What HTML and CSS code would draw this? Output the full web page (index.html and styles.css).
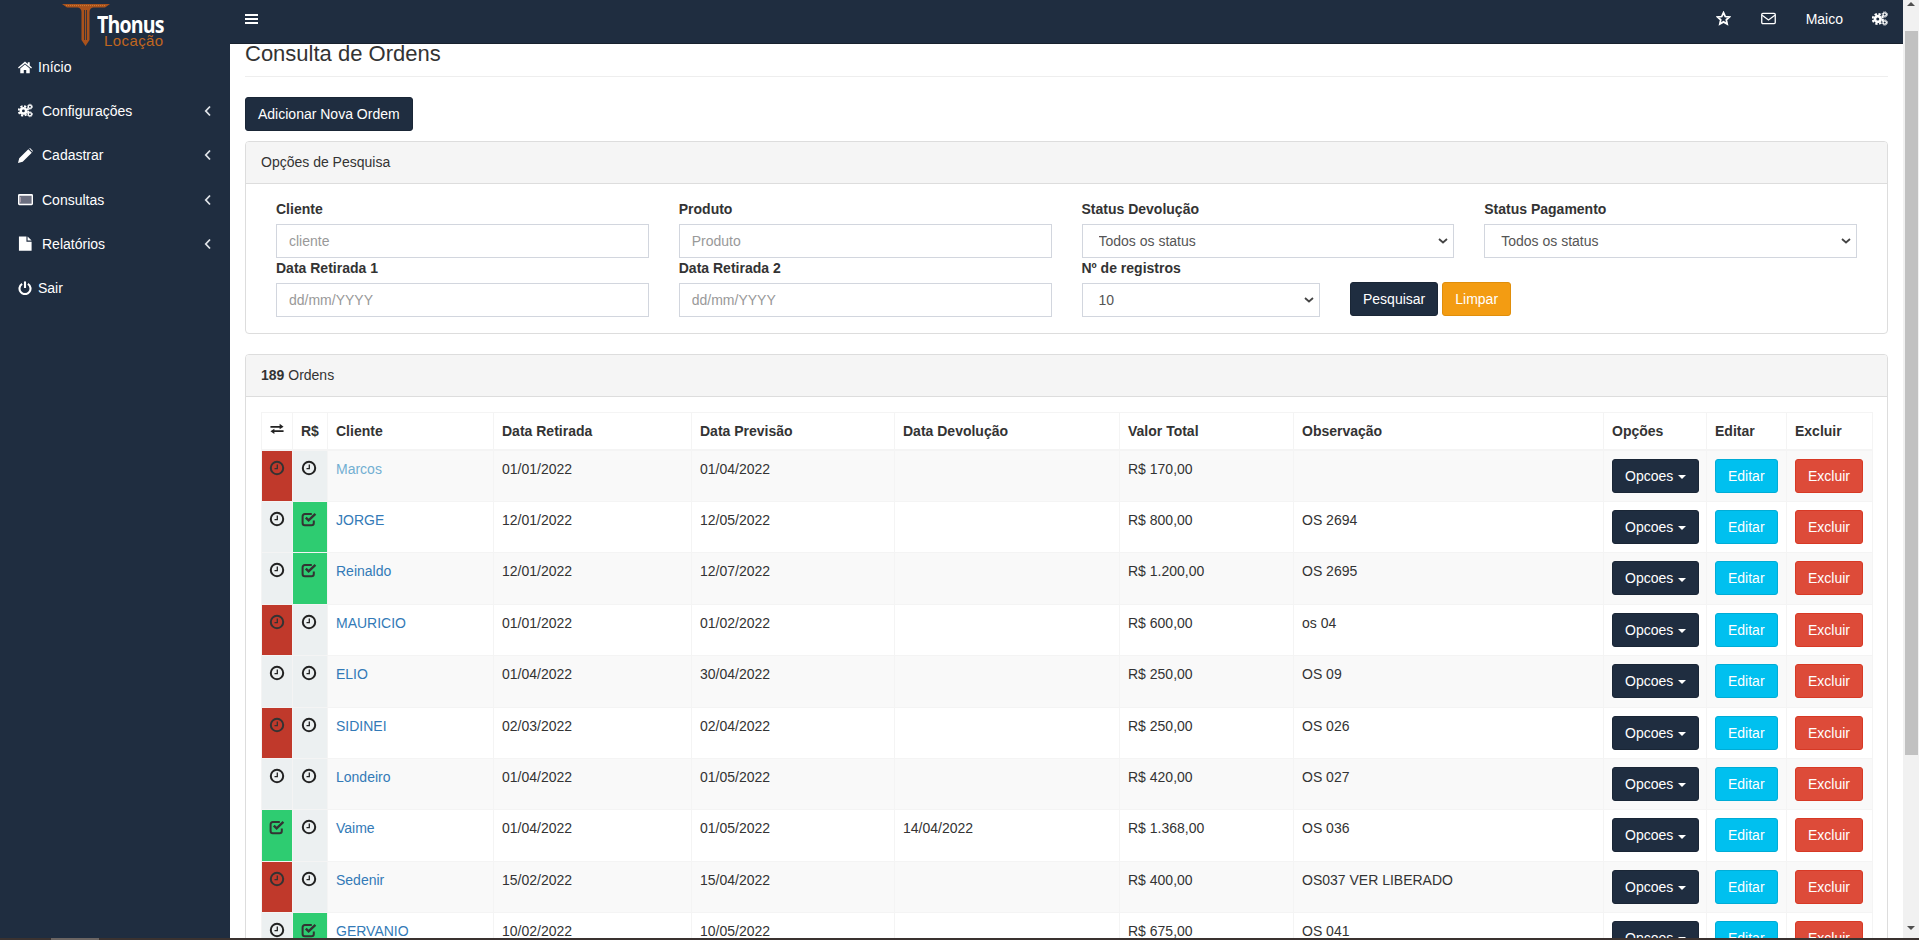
FILE: index.html
```html
<!DOCTYPE html>
<html lang="pt-BR">
<head>
  <meta charset="UTF-8" />
  <title>Thonus Locação - Consulta de Ordens</title>
  <link rel="stylesheet" href="styles.css">
</head>
<body>
  <!-- icon set -->
  <svg class="defs" xmlns="http://www.w3.org/2000/svg">
    <symbol id="i-clock" viewBox="0 0 16 16"><circle cx="8" cy="8" r="6.200" fill="none" stroke="currentColor" stroke-width="2"/><path d="M8.300 4.500V8.600H5.500" fill="none" stroke="currentColor" stroke-width="1.300"/></symbol>
    <symbol id="i-check" viewBox="0 0 16 16"><path d="M12.800 9.500V12a2.200 2.200 0 0 1-2.200 2.200H3.800A2.200 2.200 0 0 1 1.600 12V5.300a2.200 2.200 0 0 1 2.200-2.200h7" fill="none" stroke="currentColor" stroke-width="2"/><path d="M4.800 6.600L7.600 9.400 14.400 2.800" fill="none" stroke="currentColor" stroke-width="2.400"/></symbol>
    <symbol id="i-exchange" viewBox="0 0 16 16"><path d="M.5 4.500h10.500V2L15.500 5.500 11 8.200V6.700H.5zM15.500 9.300H5V7.800L.5 10.700 5 13.800v-2.300h10.500z" fill="currentColor"/></symbol>
    <symbol id="i-home" viewBox="0 0 16 16"><path d="M8 1.800L0 8.500l1 1.200L8 3.900l7 5.800 1-1.200-2.600-2.200V2.500h-2.200v2zM2.600 9.800V15h4v-3.600h2.800V15h4V9.800L8 5.200z" fill="currentColor"/></symbol>
    <symbol id="i-cogs" viewBox="0 0 18 16"><circle cx="6.500" cy="8.500" r="3.200" fill="none" stroke="currentColor" stroke-width="3"/><circle cx="6.500" cy="8.500" r="5.700" fill="none" stroke="currentColor" stroke-width="2.200" stroke-dasharray="2.600 1.900"/><circle cx="14.300" cy="3.500" r="1.900" fill="none" stroke="currentColor" stroke-width="1.500"/><circle cx="14.300" cy="3.500" r="3" fill="none" stroke="currentColor" stroke-width="1.100" stroke-dasharray="1.400 1"/><circle cx="14.300" cy="12.500" r="1.900" fill="none" stroke="currentColor" stroke-width="1.500"/><circle cx="14.300" cy="12.500" r="3" fill="none" stroke="currentColor" stroke-width="1.100" stroke-dasharray="1.400 1"/></symbol>
    <symbol id="i-pencil" viewBox="0 0 16 16"><path d="M0 16l1.300-5L11 1.300l3.700 3.700L5 14.700zM12 .6l.8-.6 3.200 3.200-.6.800z" fill="currentColor"/></symbol>
    <symbol id="i-screen" viewBox="0 0 16 14"><rect x="0" y="1" width="16" height="12" rx="1.500" fill="currentColor"/><rect x="1.500" y="3" width="13" height="8.500" fill="#6c6f80"/><path d="M2.500 4.500v5.500" stroke="#b9a9b4" stroke-width="1"/></symbol>
    <symbol id="i-file" viewBox="0 0 14 16"><path d="M0 .5h8v5.500h5.500v9.800H0zM9.200 .5l4.300 4.300H9.200z" fill="currentColor"/></symbol>
    <symbol id="i-power" viewBox="0 0 16 16"><path d="M4.700 3.300a6.300 6.300 0 1 0 6.600 0" fill="none" stroke="currentColor" stroke-width="2.400"/><path d="M8 .5v7.500" stroke="currentColor" stroke-width="2.400"/></symbol>
    <symbol id="i-angle" viewBox="0 0 8 12"><path d="M6 1.500L1.800 6 6 10.500" fill="none" stroke="currentColor" stroke-width="1.800"/></symbol>
    <symbol id="i-star" viewBox="0 0 16 16"><path d="M8 1.800l1.900 4.100 4.400.5-3.300 3 .9 4.400L8 11.600l-3.900 2.200.9-4.400-3.300-3 4.400-.5z" fill="none" stroke="currentColor" stroke-width="1.900"/></symbol>
    <symbol id="i-mail" viewBox="0 0 16 14"><rect x=".8" y="1.500" width="14.400" height="11" rx="1.200" fill="none" stroke="currentColor" stroke-width="1.400"/><path d="M1.200 3.500L8 8.500l6.800-5" fill="none" stroke="currentColor" stroke-width="1.400"/></symbol>
  </svg>

  <div class="app">
    <aside class="sidebar">
      <a href="#" class="brand">
        <svg class="brand-mark" viewBox="0 0 48 42" xmlns="http://www.w3.org/2000/svg">
          <path d="M0 0h48l-5 3.500H31c-2 .5-3.500 2-3.500 4.500V36L23.500 42 19.500 36V8c0-2.500-1.500-4-3.500-4.500H5z" fill="#a9521c"/>
          <path d="M22.500 6v30M24.500 6v30" stroke="#1f2d40" stroke-width=".8"/>
          <path d="M4 1.600h40" stroke="#d98a3c" stroke-width=".8" stroke-dasharray="1 1"/>
        </svg>
        <span class="brand-text">
          <span class="brand-name">Thonus</span>
          <span class="brand-sub">Locação</span>
        </span>
      </a>
      <nav class="side-menu">
        <a href="#" class="side-item"><svg class="side-icon small"><use href="#i-home"/></svg><span>Início</span></a>
        <a href="#" class="side-item"><svg class="side-icon"><use href="#i-cogs"/></svg><span>Configurações</span><svg class="side-angle"><use href="#i-angle"/></svg></a>
        <a href="#" class="side-item"><svg class="side-icon"><use href="#i-pencil"/></svg><span>Cadastrar</span><svg class="side-angle"><use href="#i-angle"/></svg></a>
        <a href="#" class="side-item"><svg class="side-icon"><use href="#i-screen"/></svg><span>Consultas</span><svg class="side-angle"><use href="#i-angle"/></svg></a>
        <a href="#" class="side-item"><svg class="side-icon"><use href="#i-file"/></svg><span>Relatórios</span><svg class="side-angle"><use href="#i-angle"/></svg></a>
        <a href="#" class="side-item"><svg class="side-icon small"><use href="#i-power"/></svg><span>Sair</span></a>
      </nav>
    </aside>

    <div class="page">
      <header class="topbar">
        <a href="#" class="menu-toggle"><span></span><span></span><span></span></a>
        <div class="top-links">
          <a href="#"><svg class="top-icon"><use href="#i-star"/></svg></a>
          <a href="#"><svg class="top-icon"><use href="#i-mail"/></svg></a>
          <a href="#" class="top-user">Maico</a>
          <a href="#"><svg class="top-icon cogs"><use href="#i-cogs"/></svg></a>
        </div>
      </header>

      <main class="content">
        <h1 class="page-title">Consulta de Ordens</h1>
        <a href="#" class="btn btn-dark btn-add">Adicionar Nova Ordem</a>

        <section class="panel">
          <div class="panel-heading">Opções de Pesquisa</div>
          <form class="panel-body search-form">
            <div class="form-row">
              <div class="field span-3"><label>Cliente</label><input type="text" placeholder="cliente"></div>
              <div class="field span-3"><label>Produto</label><input type="text" placeholder="Produto"></div>
              <div class="field span-3"><label>Status Devolução</label><select><option>Todos os status</option></select></div>
              <div class="field span-3"><label>Status Pagamento</label><select><option>Todos os status</option></select></div>
            </div>
            <div class="form-row">
              <div class="field span-3"><label>Data Retirada 1</label><input type="text" placeholder="dd/mm/YYYY"></div>
              <div class="field span-3"><label>Data Retirada 2</label><input type="text" placeholder="dd/mm/YYYY"></div>
              <div class="field span-2"><label>Nº de registros</label><select><option>10</option></select></div>
              <div class="form-actions span-4">
                <button type="button" class="btn btn-dark">Pesquisar</button>
                <button type="reset" class="btn btn-orange">Limpar</button>
              </div>
            </div>
          </form>
        </section>

        <section class="panel">
          <div class="panel-heading"><strong>189</strong> Ordens</div>
          <div class="panel-body">
            <table class="orders">
              <thead>
                <tr>
                  <th class="c-status"><svg class="ico ico-head"><use href="#i-exchange"/></svg></th>
                  <th class="c-pay">R$</th>
                  <th class="c-client">Cliente</th>
                  <th class="c-date1">Data Retirada</th>
                  <th class="c-date2">Data Previsão</th>
                  <th class="c-date3">Data Devolução</th>
                  <th class="c-value">Valor Total</th>
                  <th class="c-obs">Observação</th>
                  <th class="c-opt">Opções</th>
                  <th class="c-edit">Editar</th>
                  <th class="c-del">Excluir</th>
                </tr>
              </thead>
              <tbody>
                <tr>
                  <td class="st st-red"><svg class="ico"><use href="#i-clock"/></svg></td>
                  <td class="st st-none"><svg class="ico"><use href="#i-clock"/></svg></td>
                  <td><a href="#" class="client hover">Marcos</a></td>
                  <td>01/01/2022</td><td>01/04/2022</td><td></td><td>R$ 170,00</td><td></td>
                  <td><a href="#" class="btn btn-dark">Opcoes <i class="caret"></i></a></td>
                  <td><a href="#" class="btn btn-cyan">Editar</a></td>
                  <td><a href="#" class="btn btn-red">Excluir</a></td>
                </tr>
                <tr>
                  <td class="st st-none"><svg class="ico"><use href="#i-clock"/></svg></td>
                  <td class="st st-green"><svg class="ico"><use href="#i-check"/></svg></td>
                  <td><a href="#" class="client">JORGE</a></td>
                  <td>12/01/2022</td><td>12/05/2022</td><td></td><td>R$ 800,00</td><td>OS 2694</td>
                  <td><a href="#" class="btn btn-dark">Opcoes <i class="caret"></i></a></td>
                  <td><a href="#" class="btn btn-cyan">Editar</a></td>
                  <td><a href="#" class="btn btn-red">Excluir</a></td>
                </tr>
                <tr>
                  <td class="st st-none"><svg class="ico"><use href="#i-clock"/></svg></td>
                  <td class="st st-green"><svg class="ico"><use href="#i-check"/></svg></td>
                  <td><a href="#" class="client">Reinaldo</a></td>
                  <td>12/01/2022</td><td>12/07/2022</td><td></td><td>R$ 1.200,00</td><td>OS 2695</td>
                  <td><a href="#" class="btn btn-dark">Opcoes <i class="caret"></i></a></td>
                  <td><a href="#" class="btn btn-cyan">Editar</a></td>
                  <td><a href="#" class="btn btn-red">Excluir</a></td>
                </tr>
                <tr>
                  <td class="st st-red"><svg class="ico"><use href="#i-clock"/></svg></td>
                  <td class="st st-none"><svg class="ico"><use href="#i-clock"/></svg></td>
                  <td><a href="#" class="client">MAURICIO</a></td>
                  <td>01/01/2022</td><td>01/02/2022</td><td></td><td>R$ 600,00</td><td>os 04</td>
                  <td><a href="#" class="btn btn-dark">Opcoes <i class="caret"></i></a></td>
                  <td><a href="#" class="btn btn-cyan">Editar</a></td>
                  <td><a href="#" class="btn btn-red">Excluir</a></td>
                </tr>
                <tr>
                  <td class="st st-none"><svg class="ico"><use href="#i-clock"/></svg></td>
                  <td class="st st-none"><svg class="ico"><use href="#i-clock"/></svg></td>
                  <td><a href="#" class="client">ELIO</a></td>
                  <td>01/04/2022</td><td>30/04/2022</td><td></td><td>R$ 250,00</td><td>OS 09</td>
                  <td><a href="#" class="btn btn-dark">Opcoes <i class="caret"></i></a></td>
                  <td><a href="#" class="btn btn-cyan">Editar</a></td>
                  <td><a href="#" class="btn btn-red">Excluir</a></td>
                </tr>
                <tr>
                  <td class="st st-red"><svg class="ico"><use href="#i-clock"/></svg></td>
                  <td class="st st-none"><svg class="ico"><use href="#i-clock"/></svg></td>
                  <td><a href="#" class="client">SIDINEI</a></td>
                  <td>02/03/2022</td><td>02/04/2022</td><td></td><td>R$ 250,00</td><td>OS 026</td>
                  <td><a href="#" class="btn btn-dark">Opcoes <i class="caret"></i></a></td>
                  <td><a href="#" class="btn btn-cyan">Editar</a></td>
                  <td><a href="#" class="btn btn-red">Excluir</a></td>
                </tr>
                <tr>
                  <td class="st st-none"><svg class="ico"><use href="#i-clock"/></svg></td>
                  <td class="st st-none"><svg class="ico"><use href="#i-clock"/></svg></td>
                  <td><a href="#" class="client">Londeiro</a></td>
                  <td>01/04/2022</td><td>01/05/2022</td><td></td><td>R$ 420,00</td><td>OS 027</td>
                  <td><a href="#" class="btn btn-dark">Opcoes <i class="caret"></i></a></td>
                  <td><a href="#" class="btn btn-cyan">Editar</a></td>
                  <td><a href="#" class="btn btn-red">Excluir</a></td>
                </tr>
                <tr>
                  <td class="st st-green"><svg class="ico"><use href="#i-check"/></svg></td>
                  <td class="st st-none"><svg class="ico"><use href="#i-clock"/></svg></td>
                  <td><a href="#" class="client">Vaime</a></td>
                  <td>01/04/2022</td><td>01/05/2022</td><td>14/04/2022</td><td>R$ 1.368,00</td><td>OS 036</td>
                  <td><a href="#" class="btn btn-dark">Opcoes <i class="caret"></i></a></td>
                  <td><a href="#" class="btn btn-cyan">Editar</a></td>
                  <td><a href="#" class="btn btn-red">Excluir</a></td>
                </tr>
                <tr>
                  <td class="st st-red"><svg class="ico"><use href="#i-clock"/></svg></td>
                  <td class="st st-none"><svg class="ico"><use href="#i-clock"/></svg></td>
                  <td><a href="#" class="client">Sedenir</a></td>
                  <td>15/02/2022</td><td>15/04/2022</td><td></td><td>R$ 400,00</td><td>OS037 VER LIBERADO</td>
                  <td><a href="#" class="btn btn-dark">Opcoes <i class="caret"></i></a></td>
                  <td><a href="#" class="btn btn-cyan">Editar</a></td>
                  <td><a href="#" class="btn btn-red">Excluir</a></td>
                </tr>
                <tr>
                  <td class="st st-none"><svg class="ico"><use href="#i-clock"/></svg></td>
                  <td class="st st-green"><svg class="ico"><use href="#i-check"/></svg></td>
                  <td><a href="#" class="client">GERVANIO</a></td>
                  <td>10/02/2022</td><td>10/05/2022</td><td></td><td>R$ 675,00</td><td>OS 041</td>
                  <td><a href="#" class="btn btn-dark">Opcoes <i class="caret"></i></a></td>
                  <td><a href="#" class="btn btn-cyan">Editar</a></td>
                  <td><a href="#" class="btn btn-red">Excluir</a></td>
                </tr>
              </tbody>
            </table>
          </div>
        </section>
      </main>
    </div>

    <div class="scrollbar">
      <i class="arrow-up"></i>
      <div class="scroll-thumb"></div>
      <i class="arrow-down"></i>
    </div>
  </div>
  <div class="taskbar"><span></span></div>
</body>
</html>
```

FILE: styles.css
```css
* {
  box-sizing: border-box;
}
html, body {
  height: 100%;
}
body {
  margin: 0;
  overflow: hidden;
  font-family: "Liberation Sans", Arial, sans-serif;
  font-size: 14px;
  line-height: 20px;
  color: #333;
  background: #fff;
}
a {
  text-decoration: none;
}
.defs {
  display: none;
}
.app {
  display: flex;
  height: 938px;
}

/* Sidebar */
.sidebar {
  flex: 0 0 230px;
  background: #1f2d40;
}
.brand {
  display: flex;
  height: 44px;
  padding: 4px 0 0 62px;
}
.brand-mark {
  flex: 0 0 48px;
  width: 48px;
  height: 42px;
}
.brand-text {
  display: flex;
  flex-direction: column;
  height: 44px;
  margin-left: -13px;
  padding-top: 10px;
}
.brand-name {
  font-family: "Open Sans", sans-serif;
  font-size: 23px;
  font-weight: 700;
  line-height: 20px;
  letter-spacing: -1px;
  color: #fff;
  transform: scaleX(.85);
  transform-origin: left;
}
.brand-sub {
  font-size: 15px;
  line-height: 13px;
  margin-left: 7px;
  letter-spacing: .4px;
  color: #c0661f;
}
.side-menu {
  padding-top: .5px;
}
.side-item {
  display: flex;
  align-items: center;
  height: 44.300px;
  padding: 0 18px;
  color: #fff;
}
.side-icon {
  flex: 0 0 15px;
  width: 15px;
  height: 15px;
  margin-right: 9px;
  color: #fff;
}
.side-icon.small {
  flex-basis: 14px;
  width: 14px;
  height: 14px;
  margin-right: 6px;
}
.side-angle {
  width: 8px;
  height: 12px;
  margin-left: auto;
  color: #dfe3e8;
}

/* Top bar */
.page {
  flex: 1;
  min-width: 0;
  display: flex;
  flex-direction: column;
}
.topbar {
  flex: 0 0 44px;
  display: flex;
  justify-content: space-between;
  align-items: center;
  padding: 0 15px 6px;
  background: #1f2d40;
  border-bottom: 1px solid #18212e;
}
.menu-toggle {
  display: flex;
  flex-direction: column;
  gap: 2px;
  width: 13px;
}
.menu-toggle span {
  height: 2px;
  background: #fff;
}
.top-links {
  display: flex;
  align-items: center;
  color: #fff;
}
.top-links a {
  display: flex;
  color: #fff;
}
.top-icon {
  width: 15px;
  height: 15px;
  margin-right: 30px;
}
.top-icon.cogs {
  width: 16px;
  margin-right: 0;
}
.top-user {
  margin-right: 29px;
}

/* Content */
.content {
  flex: 1;
  min-height: 0;
  overflow: hidden;
  padding: 0 15px;
}
.page-title {
  margin: -4px 0 20px;
  padding-bottom: 9px;
  font-size: 22px;
  font-weight: 400;
  line-height: 27px;
  border-bottom: 1px solid #eee;
}
.btn {
  display: inline-block;
  padding: 6px 12px;
  font-family: inherit;
  font-size: 14px;
  line-height: 20px;
  color: #fff;
  border: 1px solid transparent;
  border-radius: 3px;
  white-space: nowrap;
}
.btn-add {
  margin-bottom: 10px;
  vertical-align: top;
}
.btn-dark {
  background: #1f2d40;
  border-color: #1a2636;
}
.btn-orange {
  background: #f39c12;
  border-color: #e08e0b;
}
.btn-cyan {
  background: #00c0ef;
  border-color: #00acd6;
}
.btn-red {
  background: #dd4b39;
  border-color: #d73925;
}
.caret {
  display: inline-block;
  width: 0;
  height: 0;
  margin-left: 1px;
  vertical-align: middle;
  border-top: 4px solid #fff;
  border-left: 4px solid transparent;
  border-right: 4px solid transparent;
}

/* Panels */
.panel {
  margin-bottom: 20px;
  background: #fff;
  border: 1px solid #ddd;
  border-radius: 4px;
}
.panel-heading {
  height: 42px;
  padding: 10px 15px;
  background: #f5f5f5;
  border-bottom: 1px solid #ddd;
  border-radius: 3px 3px 0 0;
}
.panel-body {
  display: block;
  padding: 15px;
}
.search-form {
  padding-bottom: 16px;
}
.form-row {
  display: grid;
  grid-template-columns: repeat(12, 1fr);
  column-gap: 30px;
  padding: 0 15px;
}
.span-2 {
  grid-column: span 2;
}
.span-3 {
  grid-column: span 3;
}
.span-4 {
  grid-column: span 4;
}
.field label {
  display: block;
  margin-bottom: 5px;
  font-weight: 700;
}
.field input, .field select {
  display: block;
  width: 100%;
  height: 34px;
  padding: 6px 12px;
  font-family: inherit;
  font-size: 14px;
  color: #555;
  background-color: #fff;
  border: 1px solid #d2d6de;
  border-radius: 0;
}
.field input::placeholder {
  color: #999;
  opacity: 1;
}
.field select {
  padding-left: 16px;
  appearance: none;
  background-image: url("data:image/svg+xml,%3Csvg xmlns='http://www.w3.org/2000/svg' width='10' height='6'%3E%3Cpath d='M1 1l4 3.500L9 1' fill='none' stroke='%23444' stroke-width='1.800'/%3E%3C/svg%3E");
  background-repeat: no-repeat;
  background-position: right 5px center;
}
.form-actions {
  display: flex;
  gap: 4px;
  align-items: flex-end;
  padding-bottom: 1px;
}

/* Orders table */
.orders {
  width: 100%;
  table-layout: fixed;
  border-collapse: collapse;
}
.orders th, .orders td {
  padding: 8px;
  vertical-align: top;
  text-align: left;
  border: 1px solid #f4f4f4;
}
.orders th {
  border-bottom-width: 2px;
}
.orders tbody tr {
  height: 51.400px;
}
.orders tbody tr:nth-child(odd) {
  background: #f9f9f9;
}
.c-status { width: 31px; }
.c-pay { width: 35px; }
.c-client { width: 166px; }
.c-date1 { width: 198px; }
.c-date2 { width: 203px; }
.c-date3 { width: 225px; }
.c-value { width: 174px; }
.c-obs { width: 310px; }
.c-opt { width: 103px; }
.c-edit { width: 80px; }
.c-del { width: 86px; }
.orders .st, .orders th.c-status {
  padding-left: 0;
  padding-right: 0;
  text-align: center;
}
.orders .st:nth-child(2) {
  padding-right: 3px;
}
.orders .st-red {
  background: #c0392b;
}
.orders .st-green {
  background: #2ecc71;
}
.orders .st-none {
  background: #ecf0f1;
}
.ico {
  display: block;
  width: 16px;
  height: 16px;
  margin: 1px auto 0;
  color: #222;
}
.ico-head {
  width: 14px;
  height: 14px;
}
.st-red .ico, .st-green .ico {
  color: #333;
}
.client {
  color: #337ab7;
}
.client.hover {
  color: #72afd2;
}

/* Fake window scrollbar and bottom edge */
.scrollbar {
  flex: 0 0 16px;
  display: flex;
  flex-direction: column;
  align-items: center;
  background: #f1f1f1;
}
.arrow-up, .arrow-down {
  width: 0;
  flex: 0 0 4px;
  border-left: 4px solid transparent;
  border-right: 4px solid transparent;
}
.arrow-up {
  margin: 2px 0 25px;
  border-bottom: 4px solid #505050;
}
.arrow-down {
  margin: auto 0 8px;
  border-top: 4px solid #505050;
}
.scroll-thumb {
  flex: 0 0 724px;
  width: 13px;
  margin-left: 1px;
  background: #c1c1c1;
}
.taskbar {
  height: 2px;
  background: #3a3230;
}
.taskbar span {
  display: block;
  width: 48px;
  height: 2px;
  margin-left: 51px;
  background: #6b6563;
}
```
